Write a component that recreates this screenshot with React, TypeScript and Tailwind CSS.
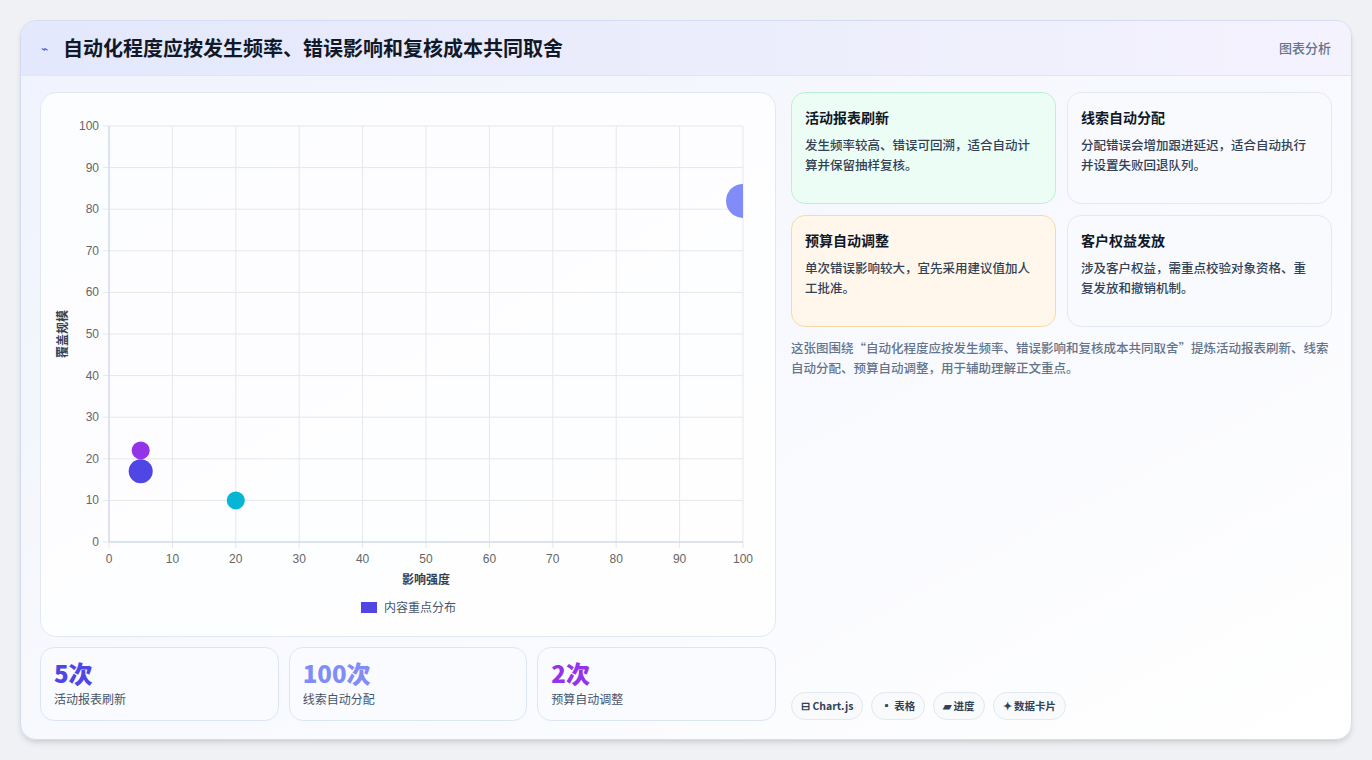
import React from "react";

const F = { fontFamily: '"Noto Sans CJK SC","Noto Sans",sans-serif' };

function Chart() {
  const x0 = 68, x1 = 702, y0 = 449, y1 = 33;
  const sx = (v: number) => x0 + ((x1 - x0) * v) / 100;
  const sy = (v: number) => y0 - ((y0 - y1) * v) / 100;
  const ticks = [0, 10, 20, 30, 40, 50, 60, 70, 80, 90, 100];
  return (
    <svg width="734" height="544" className="block" style={{ fontFamily: '"Liberation Sans",sans-serif' }}>
      <defs>
        <clipPath id="plot"><rect x={x0} y={y1} width={x1 - x0} height={y0 - y1} /></clipPath>
      </defs>
      {ticks.map((t) => (
        <g key={t}>
          <line x1={sx(t)} x2={sx(t)} y1={y1} y2={y0 + 6} stroke="#e5e7eb" />
          <line x1={x0 - 6} x2={x1} y1={sy(t)} y2={sy(t)} stroke="#e5e7eb" />
          <text x={sx(t)} y={y0 + 21} fontSize="12" fill="#666" textAnchor="middle">{t}</text>
          <text x={x0 - 10} y={sy(t) + 4} fontSize="12" fill="#666" textAnchor="end">{t}</text>
        </g>
      ))}
      <line x1={x0} x2={x0} y1={y1} y2={y0} stroke="#cbd5e1" />
      <line x1={x0} x2={x1} y1={y0} y2={y0} stroke="#cbd5e1" />
      <g clipPath="url(#plot)">
        <circle cx={sx(100)} cy={sy(82)} r="17" fill="#818cf8" />
      </g>
      <circle cx={sx(5)} cy={sy(17)} r="12" fill="#4f46e5" />
      <circle cx={sx(5)} cy={sy(22)} r="9" fill="#9333ea" />
      <circle cx={sx(20)} cy={sy(10)} r="9" fill="#06b6d4" />
      <text x={(x0 + x1) / 2} y={491} fontSize="12" fontWeight="600" fill="#334155" textAnchor="middle" style={F}>影响强度</text>
      <text transform="translate(26,241) rotate(-90)" fontSize="12" fontWeight="600" fill="#334155" textAnchor="middle" style={F}>覆盖规模</text>
      <rect x="320" y="509" width="16" height="11" fill="#4f46e5" />
      <text x="343" y="519" fontSize="12" fill="#475569" style={F}>内容重点分布</text>
    </svg>
  );
}

const cards = [
  { t: "活动报表刷新", d: "发生频率较高、错误可回溯，适合自动计算并保留抽样复核。", c: "bg-[#ecfdf5] border-[#bbf0d2]" },
  { t: "线索自动分配", d: "分配错误会增加跟进延迟，适合自动执行并设置失败回退队列。", c: "bg-[#f8fafd] border-[#e3e8f5]" },
  { t: "预算自动调整", d: "单次错误影响较大，宜先采用建议值加人工批准。", c: "bg-[#fff7ec] border-[#f8d9a8]" },
  { t: "客户权益发放", d: "涉及客户权益，需重点校验对象资格、重复发放和撤销机制。", c: "bg-[#f8fafd] border-[#e3e8f5]" },
];

export default function App() {
  return (
    <div className="w-[1372px] h-[760px] bg-[#f0f1f4] pt-[20px] pl-[20px]" style={F}>
      <div className="w-[1332px] h-[720px] rounded-[16px] border border-[#d3dcf0] overflow-hidden flex flex-col bg-gradient-to-br from-[#f0f3fd] to-white shadow-md">
        <div className="h-[55px] flex items-center justify-between pl-[20px] pr-5 border-b border-[#dfe5f5] bg-gradient-to-r from-[#e3e8fc] to-[#f4f2fd]">
          <div className="flex items-center gap-[10px]">
            <span className="text-[#3b5bdb] text-[12px] w-[12px]">⌁</span>
            <span className="text-[20px] font-bold text-[#111827]">自动化程度应按发生频率、错误影响和复核成本共同取舍</span>
          </div>
          <span className="text-[13px] text-[#64748b] font-medium">图表分析</span>
        </div>
        <div className="flex gap-[15px] px-[19px] pt-4 flex-1">
          <div className="w-[736px] flex flex-col gap-[10px]">
            <div className="h-[545px] rounded-[16px] border border-[#e2e8f0] bg-white/80">
              <Chart />
            </div>
            <div className="grid grid-cols-3 gap-[10px]">
              {[["5次", "text-[#4f46e5]", "活动报表刷新"], ["100次", "text-[#818cf8]", "线索自动分配"], ["2次", "text-[#9333ea]", "预算自动调整"]].map(([v, c, l]) => (
                <div key={l} className="h-[74px] rounded-[14px] border border-[#dde5f5] bg-[#f9fbfe] px-[13px] pt-[10px]">
                  <div className={`text-[24px] font-extrabold leading-[30px] ${c}`}>{v}</div>
                  <div className="text-[12px] text-[#475569] mt-[2px]">{l}</div>
                </div>
              ))}
            </div>
          </div>
          <div className="flex-1 flex flex-col">
            <div className="grid grid-cols-2 gap-x-[11px] gap-y-[11px]">
              {cards.map((c) => (
                <div key={c.t} className={`h-[112px] rounded-[14px] border px-[13px] pt-[14px] ${c.c}`}>
                  <div className="text-[14px] font-bold text-[#111827]">{c.t}</div>
                  <div className="text-[12.5px] leading-[20px] text-[#334155] mt-[7px] font-medium">{c.d}</div>
                </div>
              ))}
            </div>
            <p className="text-[12.5px] leading-[20px] text-[#64748b] mt-[11px] font-medium">这张图围绕“自动化程度应按发生频率、错误影响和复核成本共同取舍”提炼活动报表刷新、线索自动分配、预算自动调整，用于辅助理解正文重点。</p>
            <div className="mt-auto mb-[19px] flex gap-2">
              {["⊟ Chart.js", "▪ 表格", "▰ 进度", "✦ 数据卡片"].map((t) => (
                <span key={t} className="h-[28px] px-[9px] rounded-full border border-[#e2e8f0] bg-[#f8fafc] text-[10.5px] font-bold text-[#334155] flex items-center">{t}</span>
              ))}
            </div>
          </div>
        </div>
      </div>
    </div>
  );
}
